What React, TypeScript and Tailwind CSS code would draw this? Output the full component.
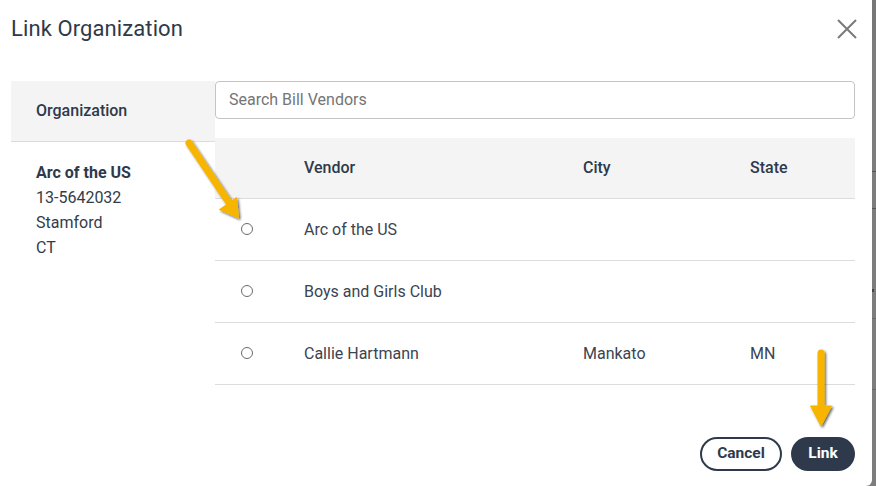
import React from 'react';

const vendors = [
  { name: 'Arc of the US', city: '', state: '' },
  { name: 'Boys and Girls Club', city: '', state: '' },
  { name: 'Callie Hartmann', city: 'Mankato', state: 'MN' },
];

const Radio: React.FC = () => (
  <span className="ml-[26px] block h-[12px] w-[12px] rounded-full border border-[#6b6b6b] bg-white" />
);

const CloseIcon: React.FC = () => (
  <svg width="20" height="20" viewBox="0 0 20 20" fill="none" stroke="#7a7a7a" strokeWidth="2">
    <path d="M1 1 L19 19 M19 1 L1 19" />
  </svg>
);

// annotation arrows drawn over the dialog
const Arrows: React.FC = () => (
  <svg className="pointer-events-none absolute inset-0" width="876" height="486" viewBox="0 0 876 486">
    <defs>
      <filter id="sh" x="-50%" y="-50%" width="200%" height="200%">
        <feDropShadow dx="1.5" dy="1.5" stdDeviation="1.2" floodColor="#000" floodOpacity="0.6" />
      </filter>
    </defs>
    <g filter="url(#sh)" fill="#f7b500" stroke="#f7b500">
      <line x1="189" y1="143" x2="230" y2="204" strokeWidth="7" strokeLinecap="round" />
      <polygon points="238.5,218 219.5,209.5 236.5,197.5" strokeWidth="1" strokeLinejoin="round" />
      <line x1="821" y1="353" x2="821" y2="410" strokeWidth="7" strokeLinecap="round" />
      <polygon points="821,426 810.5,406 831.5,406" strokeWidth="1" strokeLinejoin="round" />
    </g>
  </svg>
);

const App: React.FC = () => {
  return (
    <div
      className="relative flex h-[486px] w-[876px] overflow-hidden bg-[#7d7d7d] text-[#2e3a4b]"
      style={{ fontFamily: 'Roboto, "Noto Sans", Arial, sans-serif' }}
    >
      <div className="flex w-[872px] flex-col rounded-br-[6px] bg-white pl-[11px] pr-[17px]">
        <div className="flex h-[56px] items-center justify-between">
          <h2 className="text-[22px] font-normal tracking-[0.1px] text-[#2e3a4b]">Link Organization</h2>
          <button className="mr-[-2px] mt-[1px] flex items-center">
            <CloseIcon />
          </button>
        </div>

        <div className="mt-[25px] flex">
          <div className="w-[204px]">
            <div className="flex h-[61px] items-center border-b border-[#dcdcdc] bg-[#f4f4f4] pl-[25px] text-[16px] font-medium">
              Organization
            </div>
            <div className="pl-[25px] pt-[18px] text-[16px] leading-[25px] text-[#333c48]">
              <div className="font-bold text-[#2e3a4b]">Arc of the US</div>
              <div>13-5642032</div>
              <div>Stamford</div>
              <div>CT</div>
            </div>
          </div>

          <div className="w-[640px]">
            <input
              className="h-[38px] w-full rounded-[4px] border border-[#c4c4c4] px-[13px] pb-[1px] text-[16px] text-[#2e3a4b] placeholder:text-[#757575] focus:outline-none"
              placeholder="Search Bill Vendors"
            />
            <div className="mt-[19px] text-[16px]">
              <div className="grid h-[61px] grid-cols-[89px_279px_167px_1fr] items-center border-b border-[#dcdcdc] bg-[#f4f4f4] font-medium">
                <div />
                <div>Vendor</div>
                <div>City</div>
                <div>State</div>
              </div>
              {vendors.map((v) => (
                <div
                  key={v.name}
                  className="grid h-[62px] grid-cols-[89px_279px_167px_1fr] items-center border-b border-[#dcdcdc] text-[#3a4453]"
                >
                  <div className="-mt-[2px]">
                    <Radio />
                  </div>
                  <div className="mt-[1px]">{v.name}</div>
                  <div className="mt-[1px]">{v.city}</div>
                  <div className="mt-[1px]">{v.state}</div>
                </div>
              ))}
            </div>
            <div className="mt-[52px] flex justify-end gap-[9px]">
              <button className="h-[34px] w-[82px] rounded-full border-2 border-[#2e3a4b] text-[15.5px] font-bold text-[#2e3a4b]">
                Cancel
              </button>
              <button className="h-[34px] w-[64px] rounded-full bg-[#2e3a4b] text-[15.5px] font-bold text-white">
                Link
              </button>
            </div>
          </div>
        </div>
      </div>

      <div className="relative flex-1">
        <div className="absolute left-0 right-0 top-0 h-[40px] bg-[#777]" />
        <div className="absolute left-0 right-0 top-[171px] h-px bg-[#555]" />
        <div className="absolute left-0 right-0 top-[208px] h-px bg-[#555]" />
        <div className="absolute left-0 top-[289px] h-[3px] w-[2px] bg-[#444]" />
        <div className="absolute left-0 right-0 top-[318px] h-px bg-[#6a6a6a]" />
        <div className="absolute left-0 right-0 top-[389px] h-px bg-[#6a6a6a]" />
      </div>

      <Arrows />
    </div>
  );
};

export default App;
